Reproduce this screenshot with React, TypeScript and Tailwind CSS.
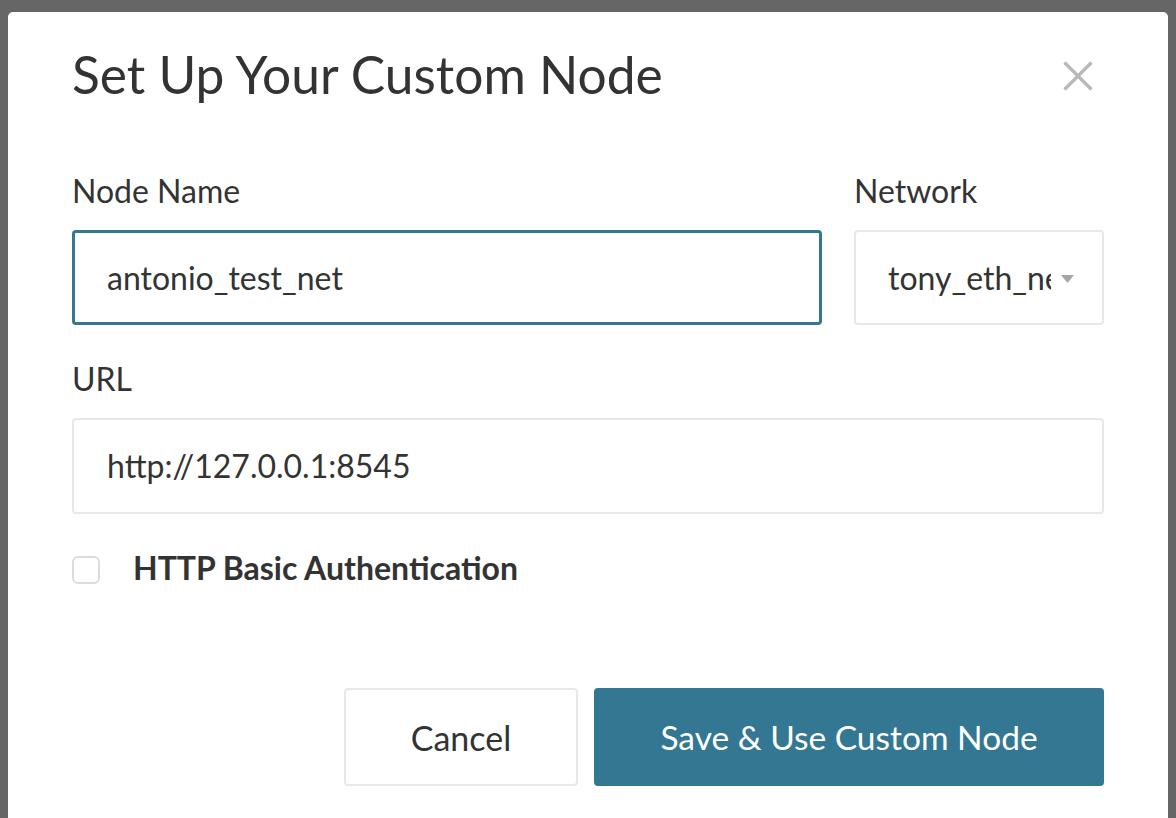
export default function App() {
    return (
        <div className="w-[1176px] h-[818px] overflow-hidden bg-[#666666] pt-3 pl-2 pr-2 font-['Lato','Liberation_Sans',sans-serif] text-[#333333]">
            <div className="bg-white rounded-[5px] h-[830px] px-16 pt-[32px]">
                {/* Header */}
                <div className="flex items-center justify-between">
                    <h2 className="text-[51.5px] leading-[60px] font-normal">Set Up Your Custom Node</h2>
                    <button className="mr-[11px] mt-[3px] text-[#b8b8b8]">
                        <svg width="30" height="30" viewBox="0 0 30 30" stroke="currentColor" strokeWidth="3.2">
                            <path d="M1.5 1.5 L28.5 28.5 M28.5 1.5 L1.5 28.5" />
                        </svg>
                    </button>
                </div>

                {/* Node name + network */}
                <div className="flex gap-8 mt-[68px]">
                    <div className="flex-1">
                        <label className="block text-[32px] leading-[38px] mb-[20px]">Node Name</label>
                        <div className="h-[95px] border-[3px] border-[#337793] rounded-[4px] flex items-center px-[32px] text-[32px]">
                            antonio_test_net
                        </div>
                    </div>
                    <div className="w-[250px]">
                        <label className="block text-[32px] leading-[38px] mb-[20px]">Network</label>
                        <div className="h-[95px] border-2 border-[#e5e9ee] rounded-[4px] flex items-center pl-[32px] pr-[28px] text-[32px]">
                            <span className="flex-1 overflow-hidden whitespace-nowrap">tony_eth_net</span>
                            <svg width="13" height="8" viewBox="0 0 13 8" className="ml-[10px] mt-[3px] shrink-0">
                                <path d="M0 0 H13 L6.5 8 Z" fill="#a6a6a6" />
                            </svg>
                        </div>
                    </div>
                </div>

                {/* URL */}
                <div className="mt-[35px]">
                    <label className="block text-[32px] leading-[38px] mb-[20px]">URL</label>
                    <div className="h-[96px] border-2 border-[#e5e9ee] rounded-[4px] flex items-center px-[33px] text-[32px]">
                        http://127.0.0.1:8545
                    </div>
                </div>

                {/* Basic auth */}
                <div className="flex items-center h-[28px] mt-[42px]">
                    <span className="w-[28px] h-[28px] border-2 border-[#dcdcdc] rounded-[6px] bg-white" />
                    <span className="ml-[33px] mb-[4px] text-[32px] leading-[38px] font-bold">HTTP Basic Authentication</span>
                </div>

                {/* Buttons */}
                <div className="flex justify-end gap-4 mt-[104px]">
                    <button className="w-[234px] h-[98px] border-2 border-[#e5e9ee] rounded-[4px] bg-white text-[34px] text-[#333333]">
                        Cancel
                    </button>
                    <button className="w-[510px] h-[98px] rounded-[4px] bg-[#337793] text-white text-[33.5px]">
                        Save &amp; Use Custom Node
                    </button>
                </div>
            </div>
        </div>
    );
}
